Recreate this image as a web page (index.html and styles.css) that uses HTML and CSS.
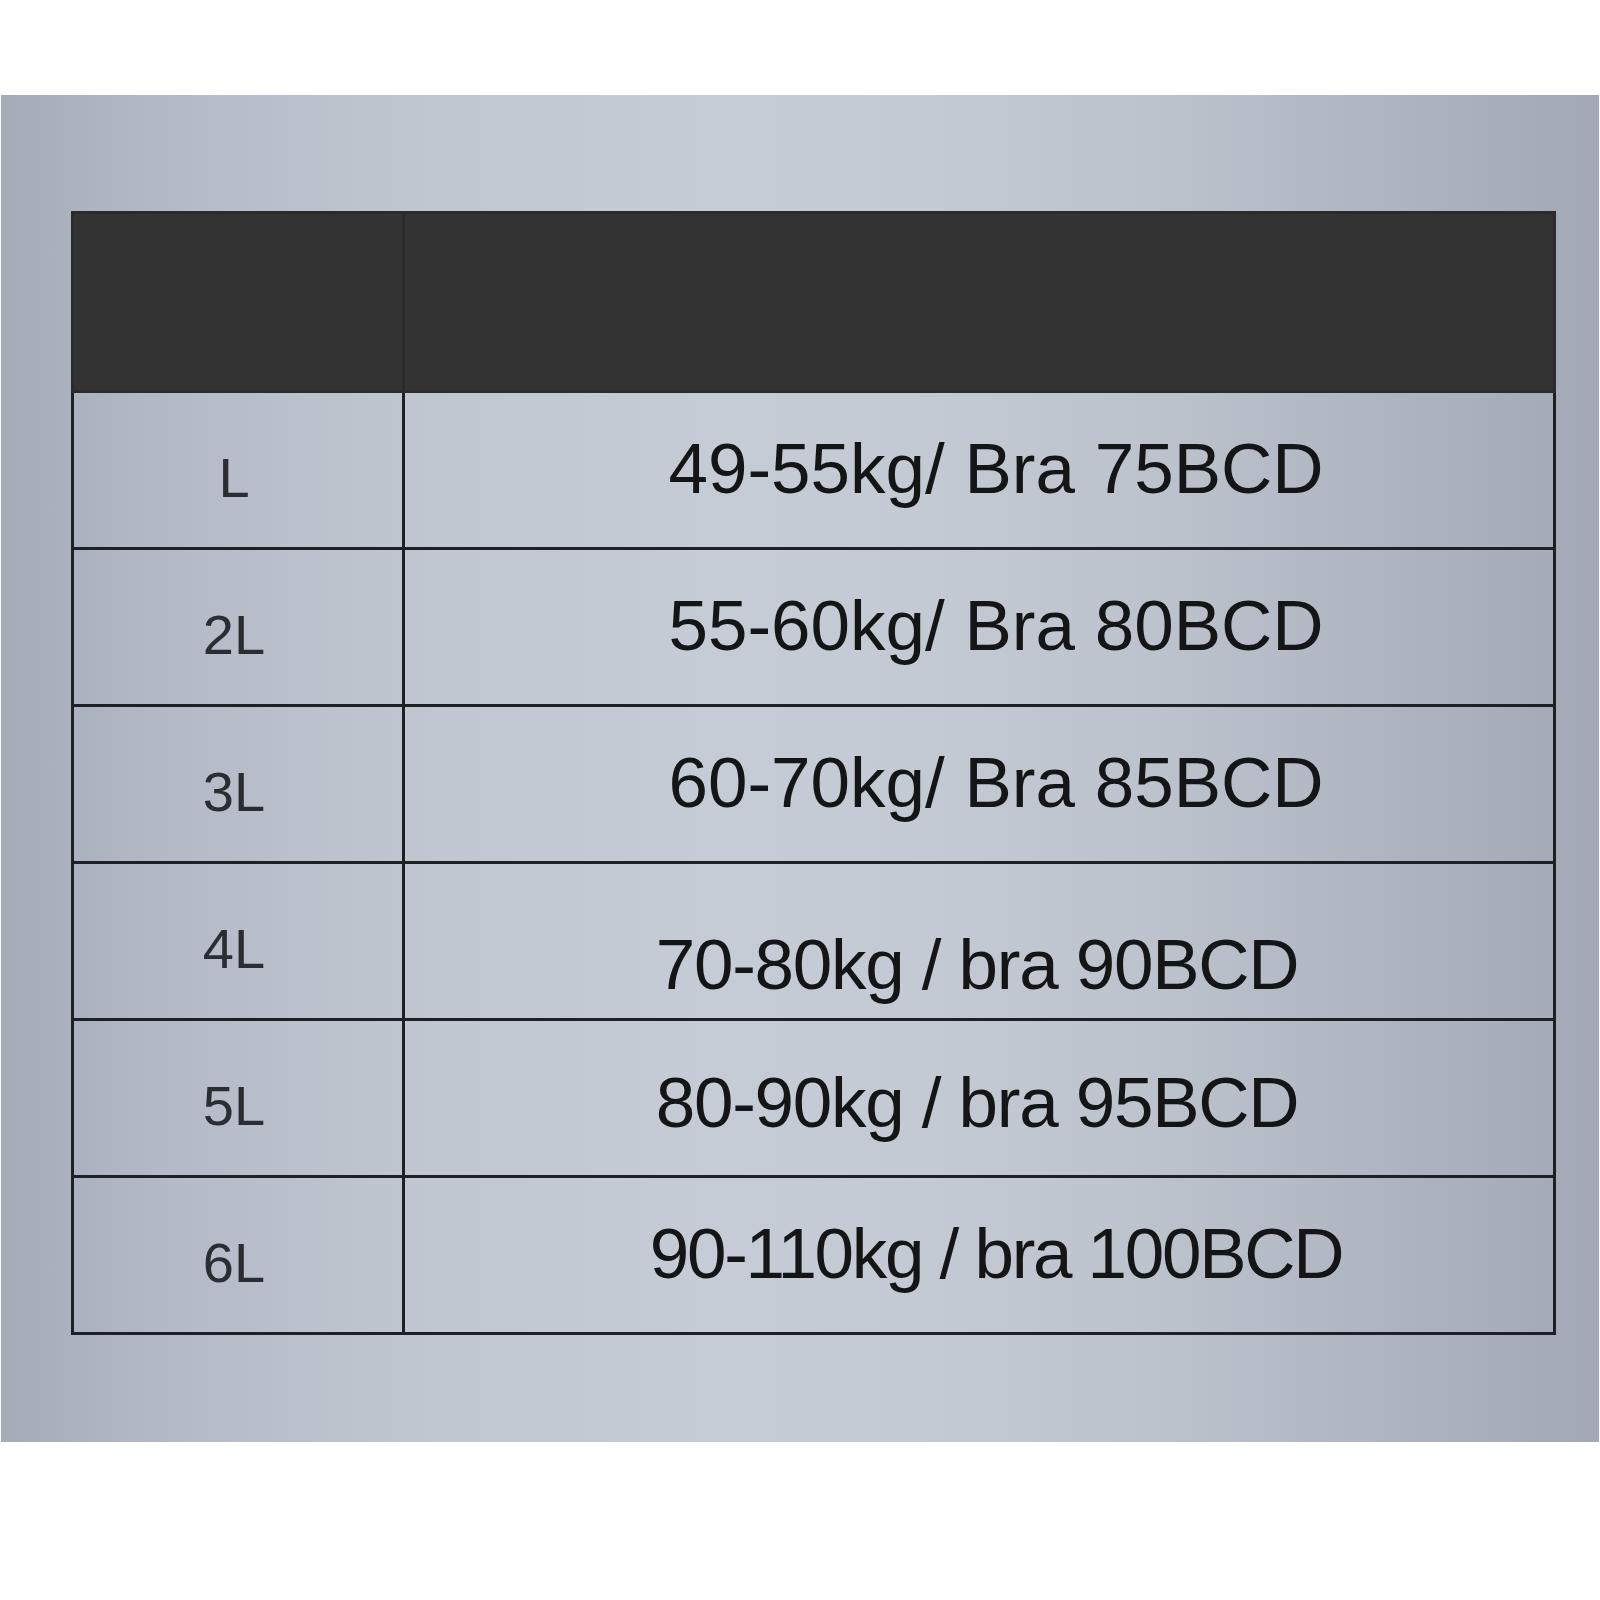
FILE: index.html
```html
<!DOCTYPE html>
<html>
<head>
<meta charset="utf-8">
<link rel="stylesheet" href="styles.css">
</head>
<body>
<div class="panel">
  <table class="chart">
    <tr class="head"><th class="c-size"></th><th class="c-data"></th></tr>
    <tr><td class="c-size"><span class="sz">L</span></td><td class="c-data"><span class="dt">49-55kg/ Bra 75BCD</span></td></tr>
    <tr><td class="c-size"><span class="sz">2L</span></td><td class="c-data"><span class="dt">55-60kg/ Bra 80BCD</span></td></tr>
    <tr><td class="c-size"><span class="sz">3L</span></td><td class="c-data"><span class="dt">60-70kg/ Bra 85BCD</span></td></tr>
    <tr><td class="c-size"><span class="sz">4L</span></td><td class="c-data"><span class="dt dt-tight dt-low dt-left">70-80kg / bra 90BCD</span></td></tr>
    <tr><td class="c-size"><span class="sz">5L</span></td><td class="c-data"><span class="dt dt-tight dt-left dt-mid">80-90kg / bra 95BCD</span></td></tr>
    <tr><td class="c-size"><span class="sz">6L</span></td><td class="c-data"><span class="dt dt-tighter">90-110kg / bra 100BCD</span></td></tr>
  </table>
</div>
</body>
</html>
```

FILE: styles.css
```css
html, body {
  margin: 0;
  padding: 0;
  background: #ffffff;
}
body {
  width: 1600px;
  height: 1600px;
  font-family: "Liberation Sans", Arial, sans-serif;
}
.panel {
  margin-top: 95px;
  margin-left: 1px;
  width: 1598px;
  height: 1347px;
  box-sizing: border-box;
  padding: 116px 0 0 70px;
  background: linear-gradient(to right,
    #a4acb7 0%,
    #b3bac5 10%,
    #bfc6d0 25%,
    #c5ccd6 45%,
    #c3cad4 58%,
    #bcc3cd 72%,
    #adb4bf 88%,
    #a2a9b4 100%);
}
.chart {
  border-collapse: collapse;
  width: 1485px;
  table-layout: fixed;
  border: 3px solid #1d2024;
}
.chart th, .chart td {
  border: 3px solid #1d2024;
  padding: 0;
  text-align: center;
  vertical-align: middle;
}
.chart .c-size {
  width: 328px;
}
.head th {
  height: 176px;
  background: #333333;
  border-color: #2b2b2b;
}
.chart td {
  height: 154px;
}
.sz {
  display: inline-block;
  font-size: 56px;
  color: #2a2d31;
  position: relative;
  top: 7px;
  left: -4px;
}
.dt {
  display: inline-block;
  font-size: 71px;
  color: #141517;
  position: relative;
  left: 17px;
  top: -2px;
}
.dt-tight {
  letter-spacing: -1.3px;
}
.dt-tighter {
  letter-spacing: -2.3px;
}
.dt-left {
  left: -2px;
}
.dt-low {
  top: 23px;
}
.dt-mid {
  top: 4px;
}
```
